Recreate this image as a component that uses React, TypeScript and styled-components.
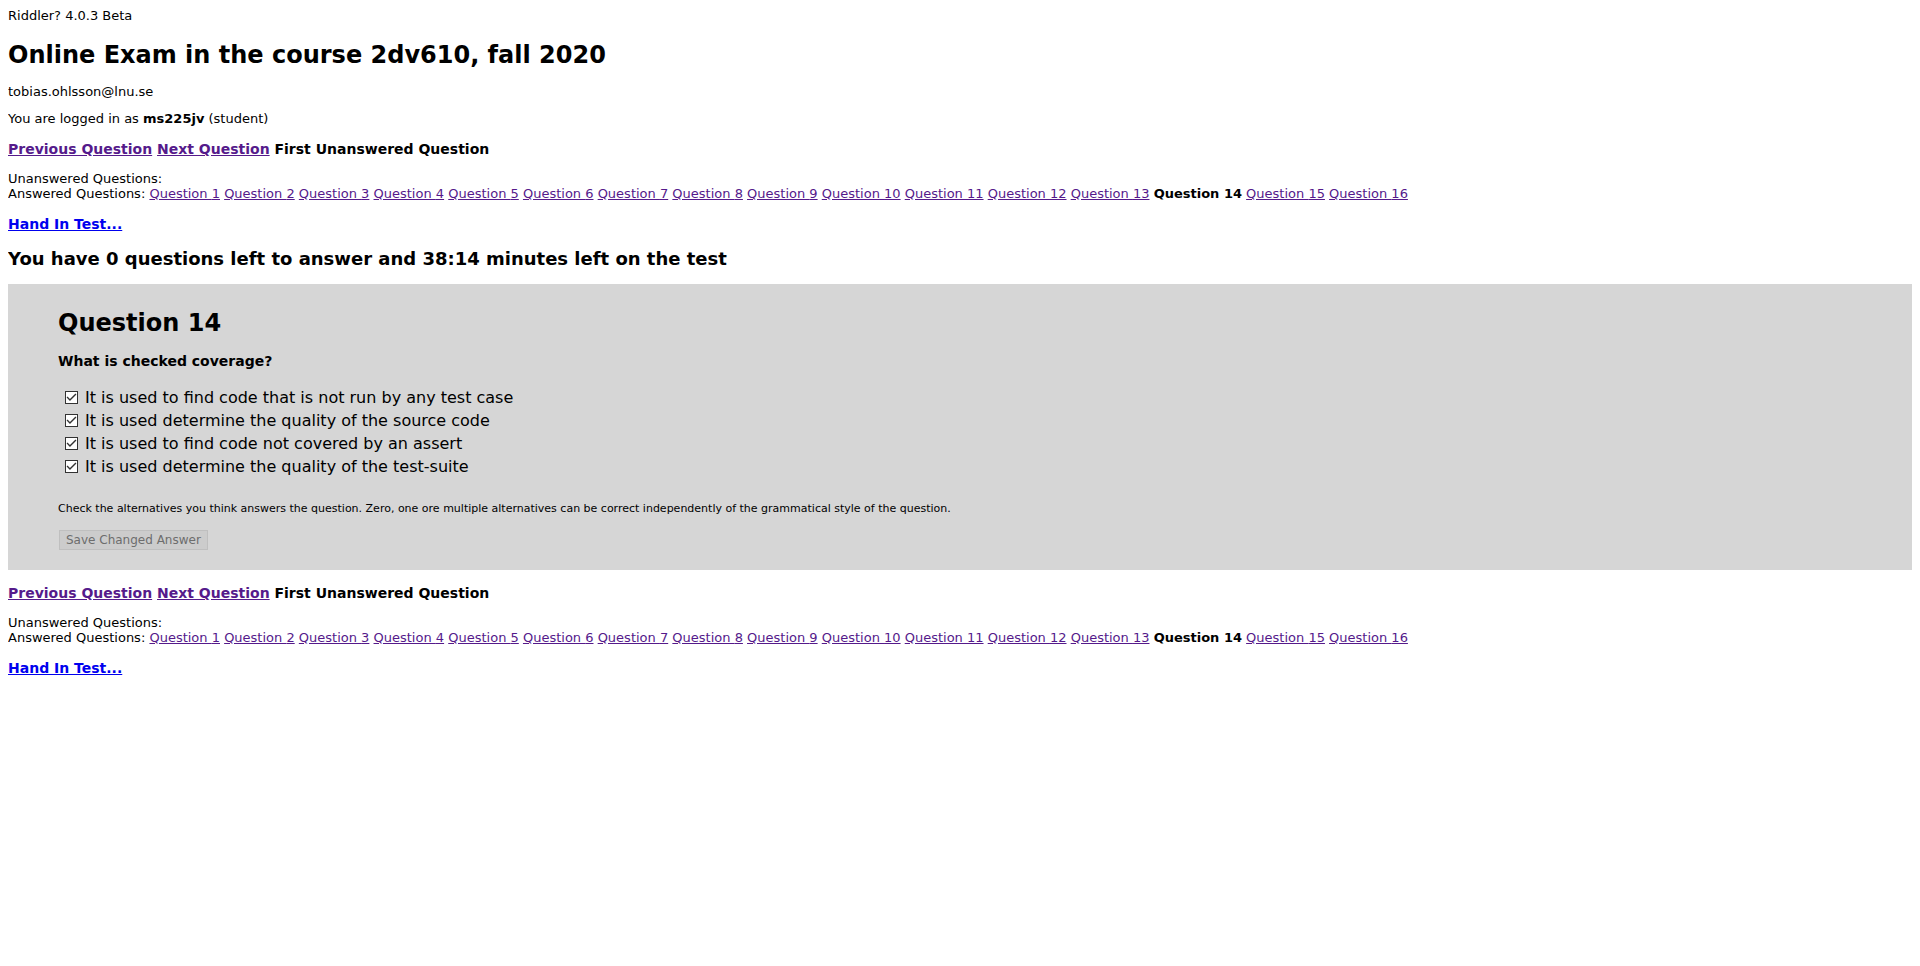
import React from 'react';
import styled, { createGlobalStyle } from 'styled-components';

const Global = createGlobalStyle`
  body {
    margin: 8px;
    background: #fff;
    color: #000;
    font-family: Verdana, "DejaVu Sans", sans-serif;
    font-size: 13px;
    line-height: 15px;
  }
`;

const Text = styled.p`
  margin: 0 0 12px;
`;

const Title = styled.h1`
  margin: 17px 0 14px;
  font-size: 24px;
  line-height: 30px;
`;

const Status = styled.h2`
  margin: 15px 0 14px;
  font-size: 18px;
  line-height: 22px;
`;

const NavHeading = styled.h3`
  margin: 14px 0 13px;
  font-size: 14px;
  line-height: 18px;
`;

const Prompt = styled(NavHeading)`
  margin-bottom: 16px;
`;

const Link = styled.a<{ $fresh?: boolean }>`
  color: ${p => (p.$fresh ? '#0000ee' : '#551a8b')};
`;

const Panel = styled.form`
  padding: 7px 50px 20px;
  background: #d6d6d6;
`;

const Options = styled.div`
  margin-bottom: 22px;
`;

const Option = styled.label`
  display: flex;
  align-items: center;
  gap: 7px;
  padding-left: 7px;
  font-size: 16px;
  line-height: 23px;
`;

const Box = styled.input`
  appearance: none;
  flex: none;
  width: 13px;
  height: 13px;
  margin: 0;
  border: 1px solid #333;
  background: #fff;

  &:checked::before {
    content: '';
    display: block;
    width: 11px;
    height: 11px;
    background: #333;
    clip-path: polygon(5% 50%, 14% 41%, 36% 64%, 86% 14%, 95% 23%, 36% 82%);
  }
`;

const Note = styled.p`
  margin: 0 0 12px;
  font-size: 11px;
  line-height: 18px;
`;

const Save = styled.button`
  display: block;
  margin: 0 1px;
  padding: 2px 6px;
  border: 1px solid #bfbfbf;
  background: #ccc;
  color: #6d6d6d;
  font-family: inherit;
  font-size: 12px;
  line-height: 14px;
`;

const numbers = Array.from({ length: 16 }, (_, i) => i + 1);
const current = 14;

const options = [
  'It is used to find code that is not run by any test case',
  'It is used determine the quality of the source code',
  'It is used to find code not covered by an assert',
  'It is used determine the quality of the test-suite',
];

function Navigation() {
  return (
    <nav>
      <NavHeading>
        <Link href="#previous">Previous Question</Link> <Link href="#next">Next Question</Link> First Unanswered Question
      </NavHeading>
      <Text>
        Unanswered Questions:
        <br />
        Answered Questions:{' '}
        {numbers.map(n => (
          <React.Fragment key={n}>
            {n === current ? <b>Question {n}</b> : <Link href={`#q${n}`}>Question {n}</Link>}{' '}
          </React.Fragment>
        ))}
      </Text>
      <NavHeading>
        <Link $fresh href="#hand-in">Hand In Test...</Link>
      </NavHeading>
    </nav>
  );
}

export default function App() {
  return (
    <main>
      <Global />
      <Text>Riddler? 4.0.3 Beta</Text>
      <Title>Online Exam in the course 2dv610, fall 2020</Title>
      <Text>tobias.ohlsson@lnu.se</Text>
      <Text>You are logged in as <b>ms225jv</b> (student)</Text>
      <Navigation />
      <Status>You have 0 questions left to answer and 38:14 minutes left on the test</Status>
      <Panel>
        <Title>Question {current}</Title>
        <Prompt>What is checked coverage?</Prompt>
        <Options>
          {options.map(o => (
            <Option key={o}>
              <Box type="checkbox" defaultChecked />
              {o}
            </Option>
          ))}
        </Options>
        <Note>
          Check the alternatives you think answers the question. Zero, one ore multiple alternatives can be correct
          independently of the grammatical style of the question.
        </Note>
        <Save type="submit" disabled>Save Changed Answer</Save>
      </Panel>
      <Navigation />
    </main>
  );
}
